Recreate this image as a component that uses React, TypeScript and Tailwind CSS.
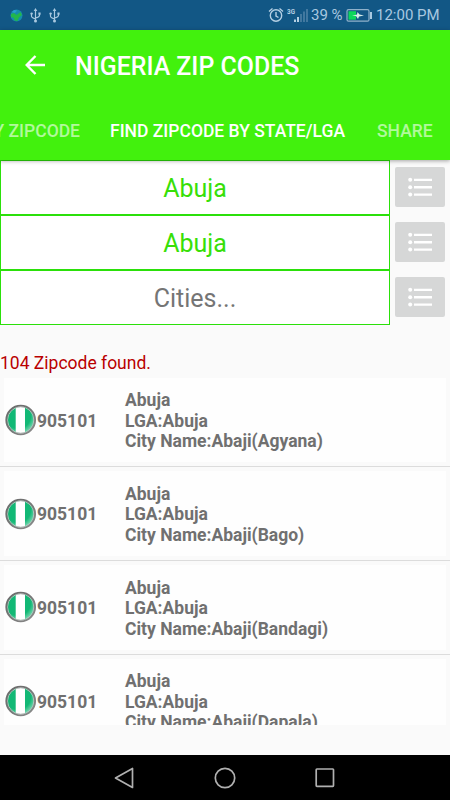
import React from "react";

const cities = ["Abaji(Agyana)", "Abaji(Bago)", "Abaji(Bandagi)", "Abaji(Dapala)"];

function Usb() {
  return (
    <svg className="h-[15px] w-[11px]" viewBox="0 0 11 15" fill="none" stroke="#a9c8e0" strokeWidth="1.2">
      <path d="M5.5 2v11M1.5 6v2.2q0 1.3 4 2.8M9.5 5.500v2q0 1.300-4 2.500" />
      <path d="M5.500 0L7.300 3H3.700z" fill="#a9c8e0" stroke="none" />
      <circle cx="5.500" cy="13" r="1.500" fill="#a9c8e0" stroke="none" />
      <circle cx="1.600" cy="5.600" r="1.200" fill="#a9c8e0" stroke="none" />
      <path d="M8.400 4.500h2.200v2.200H8.400z" fill="#a9c8e0" stroke="none" />
    </svg>
  );
}

function StatusBar() {
  return (
    <div className="flex h-[30px] shrink-0 items-center bg-[#125785] pl-[10px] text-[#a9c8e0]">
      <svg className="h-[13px] w-[13px]" viewBox="0 0 13 13">
        <circle cx="6.500" cy="6.500" r="6" fill="#168cac" />
        <path d="M1 5L4 4l2.500 2 4-3 1.500 3-3 2.500-1.500 3.500-3-.500L4 9 1 8z" fill="#22b64c" />
        <path d="M2 3l2-2 3 .500L5 4z" fill="#299bd0" />
      </svg>
      <div className="ml-[7px] flex gap-2">
        <Usb />
        <Usb />
      </div>
      <svg className="ml-[208px] h-4 w-4" viewBox="0 0 16 16" fill="none" stroke="#b4cfe3" strokeWidth="1.400">
        <circle cx="8" cy="8.500" r="5.700" />
        <path d="M8 5v4l2.500 1.500M1 4.500l3.500-3M15 4.500l-3.500-3" />
      </svg>
      <svg className="ml-[3px] h-4 w-[23px]" viewBox="0 0 23 16">
        <text x="0" y="7" fontSize="8" fontWeight="700" textLength="8" lengthAdjust="spacingAndGlyphs" fill="#b4cfe3" fontFamily="Roboto, sans-serif">3G</text>
        <path d="M7 12.500h2v2.500H7zM10 10h2v5h-2z" fill="#b4cfe3" />
        <path d="M13 7h2v8h-2zM16 4.500h2V15h-2zM19 2h2v13h-2z" fill="#41789f" />
      </svg>
      <span className="w-[33px] whitespace-nowrap pl-px text-[15px] leading-[30px]">39 %</span>
      <svg className="ml-[3px] h-[13px] w-[27px]" viewBox="0 0 27 13">
        <rect x="1" y=".700" width="22" height="11.500" rx="1.500" fill="none" stroke="#8fb1ca" strokeWidth="1.200" />
        <path d="M2.500 2.200h7.500v8.500H2.500z" fill="#0dd65b" />
        <path d="M24 3h2v7h-2z" fill="#a9c8e0" />
        <path d="M6 7l5-1.500.500-2.500 2 2.500L18 6.500l-5 1L12 10l-2-3z" fill="#d8eee9" />
      </svg>
      <span className="ml-[3px] whitespace-nowrap text-[15px] leading-[30px]">12:00 PM</span>
    </div>
  );
}

function Header() {
  return (
    <header className="relative z-10 h-[130px] shrink-0 overflow-hidden bg-[#42f10d] font-medium text-white shadow-[0_1px_4px_rgba(0,0,0,0.35)]">
      <div className="flex h-[70px] items-center pl-[25px]">
        <svg className="h-5 w-5" viewBox="0 0 20 20" fill="none" stroke="white" strokeWidth="2.400">
          <path d="M20 10H2M10.500 1L1.700 10l8.800 9" />
        </svg>
        <h1 className="ml-[30px] whitespace-nowrap pt-[3px] text-[24.9px] leading-[30px]">NIGERIA ZIP CODES</h1>
      </div>
      <nav className="flex h-[60px] items-center whitespace-nowrap pt-[3px] text-[17.5px]">
        <span className="flex w-[80px] justify-end text-white/60">BY ZIPCODE</span>
        <span className="ml-[30px] w-[235px]">FIND ZIPCODE BY STATE/LGA</span>
        <span className="ml-8 text-white/60">SHARE</span>
      </nav>
    </header>
  );
}

function Picker({ label, empty = false }: { label: string; empty?: boolean }) {
  return (
    <div className="flex h-[55px]">
      <div className={`flex w-[390px] items-center justify-center border border-[#2be00a] bg-white pt-[2px] text-[25px] ${empty ? "text-[#757575]" : "text-[#38df08]"}`}>
        {label}
      </div>
      <button className="mt-[7px] ml-[5px] flex h-10 w-[50px] items-center justify-center rounded-[2px] bg-[#d6d7d7]">
        <svg className="h-[20px] w-6" viewBox="0 0 24 20" fill="white">
          <circle cx="2.200" cy="2.800" r="2" /><circle cx="2.200" cy="10.200" r="2" /><circle cx="2.200" cy="17.600" r="2" />
          <path d="M6 1.700h18v2.300H6zM6 9.100h18v2.300H6zM6 16.500h18v2.300H6z" />
        </svg>
      </button>
    </div>
  );
}

function Flag() {
  return (
    <svg className="h-8 w-8 shrink-0" viewBox="0 0 32 32">
      <defs>
        <clipPath id="flagDisc"><circle cx="15.700" cy="16" r="13.800" /></clipPath>
        <linearGradient id="flagRim" x1="0" y1="0" x2="1" y2="1">
          <stop offset="0" stopColor="#686868" /><stop offset=".5" stopColor="#777" /><stop offset="1" stopColor="#8c8c8c" />
        </linearGradient>
        <radialGradient id="flagShine" cx=".4" cy=".35" r=".7">
          <stop offset=".65" stopColor="white" stopOpacity="0" /><stop offset="1" stopColor="white" stopOpacity=".55" />
        </radialGradient>
      </defs>
      <g clipPath="url(#flagDisc)">
        <path d="M0 0h32v32H0z" fill="#fff" />
        <path d="M0 0h10.700v32H0zM20 0H32v32H20z" fill="#12b875" />
        <circle cx="15.700" cy="16" r="14" fill="url(#flagShine)" />
      </g>
      <circle cx="15.700" cy="16" r="13.200" fill="none" stroke="#b9c4c0" strokeWidth="1" />
      <circle cx="15.700" cy="16" r="14.400" fill="none" stroke="url(#flagRim)" strokeWidth="1.900" />
    </svg>
  );
}

function ResultRow({ city }: { city: string }) {
  return (
    <li className="h-[93.75px] border-b border-[#dcdcdc] p-1">
      <div className="flex h-full items-center bg-[#fefefe] text-[17.5px] font-bold leading-[20.5px] text-[#707070]">
        <div className="flex w-[121px] items-center pl-px">
          <Flag />
          <span className="pt-[2px]">905101</span>
        </div>
        <div className="whitespace-nowrap pt-[2px]">
          <p>Abuja</p>
          <p>LGA:Abuja</p>
          <p>City Name:{city}</p>
        </div>
      </div>
    </li>
  );
}

export default function App() {
  return (
    <div className="flex h-[800px] w-[450px] flex-col overflow-hidden bg-[#fafafa] font-['Roboto',sans-serif]">
      <StatusBar />
      <Header />
      <main className="flex flex-1 flex-col">
        <Picker label="Abuja" />
        <Picker label="Abuja" />
        <Picker label="Cities..." empty />
        <p className="mt-[28px] h-[20.6px] whitespace-nowrap text-[17.5px] leading-[21px] text-[#b90000]">104 Zipcode found.</p>
        <ul className="h-[351.4px] overflow-hidden">
          {cities.map((city) => <ResultRow key={city} city={city} />)}
        </ul>
      </main>
      <footer className="flex h-[45px] shrink-0 items-center justify-center gap-[79px] bg-black">
        <svg className="h-[22px] w-[22px]" viewBox="0 0 22 22" fill="none" stroke="#b0b0b0" strokeWidth="1.700">
          <path d="M19.500 1.500v19L2.500 11z" strokeLinejoin="round" />
        </svg>
        <svg className="h-[22px] w-[22px]" viewBox="0 0 22 22" fill="none" stroke="#b0b0b0" strokeWidth="1.700">
          <circle cx="11" cy="11" r="9.700" />
        </svg>
        <svg className="h-[22px] w-[22px]" viewBox="0 0 22 22" fill="none" stroke="#b0b0b0" strokeWidth="1.700">
          <rect x="1.200" y="2" width="17.300" height="17.300" rx=".7" />
        </svg>
      </footer>
    </div>
  );
}
